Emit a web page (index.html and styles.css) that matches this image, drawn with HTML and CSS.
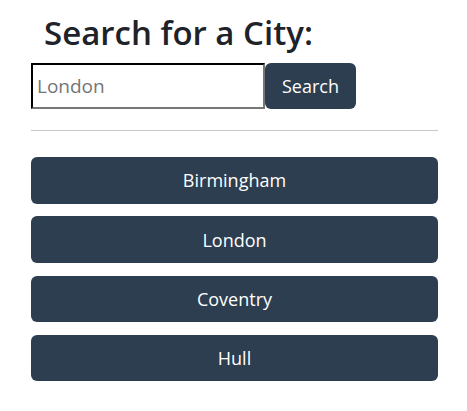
FILE: index.html
```html
<!DOCTYPE html>
<html>
<head>
<meta charset="utf-8">
<link rel="stylesheet" href="styles.css">
</head>
<body>
<div class="app">
  <h1 class="title">Search for a City:</h1>
  <form class="search">
    <input class="search-input" type="text" placeholder="London">
    <button class="search-btn" type="button">Search</button>
  </form>
  <hr class="divider">
  <div class="history">
    <button class="city" type="button">Birmingham</button>
    <button class="city" type="button">London</button>
    <button class="city" type="button">Coventry</button>
    <button class="city" type="button">Hull</button>
  </div>
</div>
</body>
</html>
```

FILE: styles.css
```css
* { box-sizing: border-box; }
body {
  margin: 0;
  background: #fff;
  font-family: "Open Sans", "Noto Sans", sans-serif;
  color: #212529;
}
.app {
  width: 407px;
  margin-left: 31px;
}
.title {
  margin: 0;
  padding: 12px 0 0 13px;
  height: 62.5px;
  font-size: 33px;
  font-weight: 600;
  line-height: 42px;
  color: #1e2229;
}
.search {
  display: flex;
  margin: 0;
}
.search-input {
  width: 234px;
  height: 46.5px;
  margin: 0;
  border: 2px inset #767676;
  border-top-color: #1a1a1a;
  border-left-color: #1a1a1a;
  padding: 0 4px;
  font-family: inherit;
  font-size: 19px;
  color: #333;
  outline: none;
}
.search-input::placeholder { color: #757575; }
.search-btn {
  width: 91px;
  height: 46.5px;
  border: none;
  border-radius: 6px;
  background: #2c3e50;
  color: #fff;
  font-family: inherit;
  font-size: 18px;
  padding: 0;
}
.divider {
  margin: 20.5px 0 26.5px;
  border: none;
  border-top: 1px solid #c8c8c8;
  height: 0;
}
.history {
  display: flex;
  flex-direction: column;
  gap: 12.8px;
}
.city {
  width: 100%;
  height: 46.5px;
  border: none;
  border-radius: 6px;
  background: #2c3e50;
  color: #fff;
  font-family: inherit;
  font-size: 18px;
  padding: 0;
}
```
